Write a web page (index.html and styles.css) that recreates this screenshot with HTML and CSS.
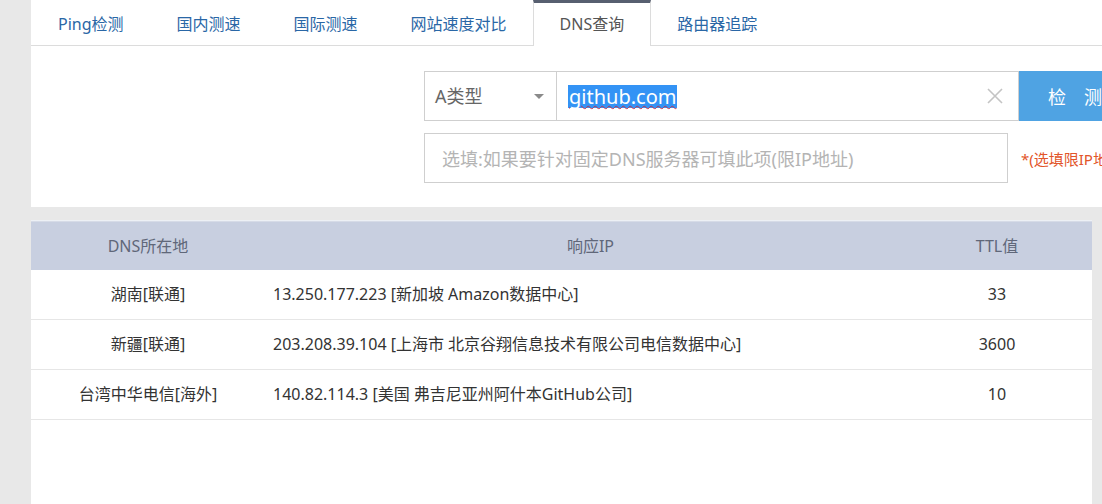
FILE: index.html
```html
<!DOCTYPE html>
<html lang="zh">
<head>
<meta charset="utf-8">
<title>DNS查询</title>
<link rel="stylesheet" href="styles.css">
</head>
<body>
<div class="page">
  <section class="top-panel">
    <nav class="tabs">
      <a class="tab">Ping检测</a>
      <a class="tab">国内测速</a>
      <a class="tab">国际测速</a>
      <a class="tab">网站速度对比</a>
      <a class="tab active">DNS查询</a>
      <a class="tab">路由器追踪</a>
    </nav>
    <div class="form">
      <div class="row">
        <div class="select"><span>A类型</span><i class="caret"></i></div>
        <div class="host"><span class="sel">github.com</span>
          <svg class="clear" width="16" height="16" viewBox="0 0 16 16"><path d="M1 1L15 15M15 1L1 15" stroke="#c4c4c4" stroke-width="1.6" fill="none"/></svg>
        </div>
        <div class="btn"><span>检</span><span>测</span></div>
      </div>
      <div class="row row2">
        <div class="server">选填:如果要针对固定DNS服务器可填此项(限IP地址)</div>
        <div class="note">*(选填限IP地址)</div>
      </div>
    </div>
  </section>
  <section class="result">
    <div class="thead">
      <div class="c1">DNS所在地</div>
      <div class="c2 center">响应IP</div>
      <div class="c3">TTL值</div>
    </div>
    <div class="tr">
      <div class="c1">湖南[联通]</div>
      <div class="c2">13.250.177.223 [新加坡 Amazon数据中心]</div>
      <div class="c3">33</div>
    </div>
    <div class="tr">
      <div class="c1">新疆[联通]</div>
      <div class="c2">203.208.39.104 [上海市 北京谷翔信息技术有限公司电信数据中心]</div>
      <div class="c3">3600</div>
    </div>
    <div class="tr">
      <div class="c1">台湾中华电信[海外]</div>
      <div class="c2">140.82.114.3 [美国 弗吉尼亚州阿什本GitHub公司]</div>
      <div class="c3">10</div>
    </div>
  </section>
</div>
</body>
</html>
```

FILE: styles.css
```css
html, body {
  margin: 0;
  padding: 0;
  height: 100%;
  overflow: hidden;
}
body {
  background: #e8e8e8;
  font-family: "Noto Sans", "Noto Sans CJK SC", sans-serif;
  color: #333;
}
.page {
  margin-left: 31px;
  width: 1200px;
  display: flex;
  flex-direction: column;
  height: 504px;
}
.top-panel {
  background: #fff;
  height: 207px;
  width: 1200px;
}
.tabs {
  display: flex;
  height: 45px;
  border-bottom: 1px solid #dcdcdc;
}
.tab {
  display: flex;
  align-items: center;
  padding: 0 26px;
  border: 1px solid transparent;
  border-top: 3px solid transparent;
  border-bottom: 0;
  margin-left: -1px;
  font-size: 16px;
  line-height: 20px;
  color: #2a67a6;
  padding-bottom: 1px;
  box-sizing: border-box;
  height: 45px;
}
.tab:first-child { margin-left: 0; }
.tab.active {
  border-color: #dcdcdc;
  border-top-color: #575f70;
  background: #fff;
  color: #555;
  height: 46px;
  padding-bottom: 2px;
  margin-bottom: -1px;
}
.form {
  padding-left: 393px;
  padding-top: 25px;
}
.row {
  display: flex;
  height: 50px;
}
.row2 {
  margin-top: 12px;
  align-items: center;
}
.select {
  width: 133px;
  border: 1px solid #cfcfcf;
  display: flex;
  align-items: center;
  padding-left: 10px;
  box-sizing: border-box;
  position: relative;
  font-size: 18px;
  line-height: 24px;
  color: #666;
}
.caret {
  position: absolute;
  left: 109px;
  top: 22px;
  width: 0;
  height: 0;
  border-left: 5px solid transparent;
  border-right: 5px solid transparent;
  border-top: 5px solid #8a8a8a;
}
.host {
  width: 462px;
  box-sizing: border-box;
  border: 1px solid #cfcfcf;
  border-left: 0;
  display: flex;
  align-items: center;
  padding-left: 11px;
  position: relative;
  font-size: 20px;
}
.sel {
  background: #3393f5;
  color: #fff;
  line-height: 23px;
  padding: 0 1px;
  text-decoration: underline wavy #c0304a;
  text-decoration-thickness: 1px;
  text-underline-offset: 1px;
}
.clear {
  position: absolute;
  left: 430px;
  top: 16px;
}
.btn {
  width: 110px;
  background: #4fa3e3;
  color: #fff;
  font-size: 18px;
  display: flex;
  align-items: center;
  gap: 18px;
  padding-left: 29px;
  box-sizing: border-box;
}
.server {
  width: 584px;
  height: 50px;
  box-sizing: border-box;
  border: 1px solid #cfcfcf;
  display: flex;
  align-items: center;
  padding-left: 17px;
  font-size: 18px;
  color: #b4b4b4;
}
.note {
  margin-left: 13px;
  font-size: 15px;
  color: #e2552a;
  white-space: nowrap;
}
.result {
  margin-top: 13px;
  width: 1061px;
  background: #fff;
  flex: 1;
  border-top: 1px solid #edf0f5;
}
.thead, .tr {
  display: grid;
  grid-template-columns: 234px 1fr 190px;
  align-items: center;
  line-height: 20px;
}
.thead {
  background: #c8cfe0;
  color: #606779;
  font-size: 16px;
  border-top: 1px solid #d6dbe7;
  padding-bottom: 1px;
  box-sizing: border-box;
  height: 49px;
}
.tr {
  height: 50px;
  box-sizing: border-box;
  padding-bottom: 1px;
  border-bottom: 1px solid #e6e6e6;
  font-size: 16px;
  color: #333;
}
.c1, .c3 { text-align: center; }
.c2 { padding-left: 8px; }
.c2.center { text-align: center; padding-left: 14px; }
```
